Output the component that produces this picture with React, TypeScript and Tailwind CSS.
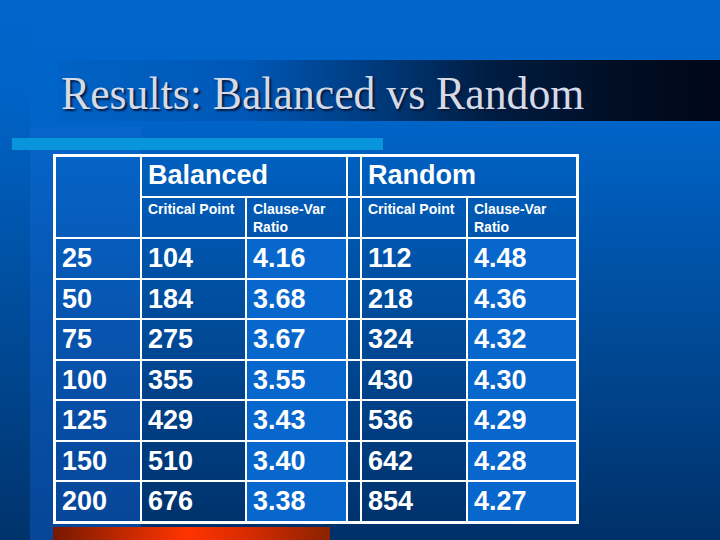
const rows = [
  ['25', '104', '4.16', '112', '4.48'],
  ['50', '184', '3.68', '218', '4.36'],
  ['75', '275', '3.67', '324', '4.32'],
  ['100', '355', '3.55', '430', '4.30'],
  ['125', '429', '3.43', '536', '4.29'],
  ['150', '510', '3.40', '642', '4.28'],
  ['200', '676', '3.38', '854', '4.27'],
]

function NumCell({ value, fill, lastCol, lastRow }: { value?: string; fill?: boolean; lastCol?: boolean; lastRow?: boolean }) {
  return (
    <div
      className={[
        'flex items-center px-[6px] text-[27px] font-bold text-white border-white',
        lastCol ? '' : 'border-r-2',
        lastRow ? '' : 'border-b-2',
        fill ? 'bg-[#0867cc]' : '',
      ].join(' ')}
    >
      {value}
    </div>
  )
}

export default function App() {
  return (
    <div className="w-[720px] h-[540px] overflow-hidden flex flex-col font-['Liberation_Sans',Arial,sans-serif] [background-image:linear-gradient(to_bottom,transparent_0%,transparent_23%,rgba(30,110,220,0.22)_24%,rgba(20,110,240,0.35)_100%),linear-gradient(to_bottom,#0066cc_0%,#0062c4_20%,#00336c_100%),linear-gradient(to_bottom,#0066cc_0%,#0064c8_22%,#003068_100%)] [background-size:111px_100%,30px_100%,100%_100%] [background-position:30px_0,0_0,0_0] bg-no-repeat">
      <div className="h-[60px] shrink-0" />

      {/* title bar */}
      <div className="h-[61px] shrink-0 ml-[58px] pl-[3px] pt-[10px] bg-[linear-gradient(to_right,#0062c4_0%,#0058b8_28%,#003a7c_48%,#001c40_66%,#000d22_86%,#00081a_100%)]">
        <h1 className="inline-block origin-left scale-x-[0.93] whitespace-nowrap font-['Liberation_Serif','Times_New_Roman',serif] text-[47px] leading-none font-normal text-[#d6dae6] [text-shadow:2px_2px_2px_#06183c]">
          Results: Balanced vs Random
        </h1>
      </div>

      <div className="mt-[17px] ml-[12px] h-[12px] w-[371px] shrink-0 bg-[#0895dc]" />

      {/* table */}
      <div className="mt-[4px] ml-[53px] w-[526px] shrink-0 grid grid-cols-[86px_105px_101px_14px_106px_108px] grid-rows-[41px_41px_repeat(6,40.5px)_39px] border-[3px] border-white">
        <div className="row-span-2 border-r-2 border-b-2 border-white" />
        <div className="col-span-2 flex items-center px-[6px] pb-[2px] border-r-2 border-b-2 border-white text-[27px] font-bold text-white">
          Balanced
        </div>
        <div className="border-r-2 border-b-2 border-white" />
        <div className="col-span-2 flex items-center px-[6px] pb-[2px] border-b-2 border-white text-[27px] font-bold text-white">
          Random
        </div>

        <div className="px-[6px] pt-[2px] border-r-2 border-b-2 border-white text-[14px] leading-[18px] font-bold text-white">Critical Point</div>
        <div className="px-[6px] pt-[2px] border-r-2 border-b-2 border-white text-[14px] leading-[18px] font-bold text-white">Clause-Var<br />Ratio</div>
        <div className="border-r-2 border-b-2 border-white" />
        <div className="px-[6px] pt-[2px] border-r-2 border-b-2 border-white text-[14px] leading-[18px] font-bold text-white">Critical Point</div>
        <div className="px-[6px] pt-[2px] border-b-2 border-white text-[14px] leading-[18px] font-bold text-white">Clause-Var<br />Ratio</div>

        {rows.map((r, i) => {
          const last = i === rows.length - 1
          return [
            <NumCell key={`${i}a`} value={r[0]} lastRow={last} />,
            <NumCell key={`${i}b`} value={r[1]} lastRow={last} />,
            <NumCell key={`${i}c`} value={r[2]} fill lastRow={last} />,
            <NumCell key={`${i}d`} lastRow={last} />,
            <NumCell key={`${i}e`} value={r[3]} lastRow={last} />,
            <NumCell key={`${i}f`} value={r[4]} fill lastCol lastRow={last} />,
          ]
        })}
      </div>

      <div className="mt-[3px] ml-[53px] h-[13px] w-[277px] shrink-0 bg-[linear-gradient(to_right,#761800_0%,#c02800_25%,#ff3400_48%,#d82c00_70%,#8a2200_100%)]" />
    </div>
  )
}
